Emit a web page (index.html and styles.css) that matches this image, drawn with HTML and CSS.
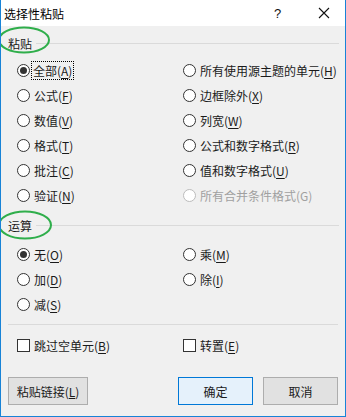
FILE: index.html
```html
<!DOCTYPE html>
<html lang="zh-CN">
<head>
  <meta charset="UTF-8" />
  <meta name="viewport" content="width=device-width, initial-scale=1.0" />
  <title>选择性粘贴</title>
  <link rel="stylesheet" href="styles.css">
</head>
<body>

  <div class="dialog">
    <!-- Title bar -->
    <div class="titlebar">
      <span class="title">选择性粘贴</span>
      <span class="help">?</span>
      <span class="close">
        <svg width="12" height="12" viewBox="0 0 12 12"><path d="M1 1L11 11M11 1L1 11" stroke="#111" stroke-width="1.1" fill="none"/></svg>
      </span>
    </div>

    <div class="content">
      <!-- Paste -->
      <div class="group-head"><span class="group-label">粘贴</span><span class="group-line"></span></div>
      <div class="options">
        <label class="opt"><span class="radio checked"></span><span class="focus">全部(<u>A</u>)</span></label>
        <label class="opt"><span class="radio"></span>所有使用源主题的单元(<u>H</u>)</label>
        <label class="opt"><span class="radio"></span>公式(<u>F</u>)</label>
        <label class="opt"><span class="radio"></span>边框除外(<u>X</u>)</label>
        <label class="opt"><span class="radio"></span>数值(<u>V</u>)</label>
        <label class="opt"><span class="radio"></span>列宽(<u>W</u>)</label>
        <label class="opt"><span class="radio"></span>格式(<u>T</u>)</label>
        <label class="opt"><span class="radio"></span>公式和数字格式(<u>R</u>)</label>
        <label class="opt"><span class="radio"></span>批注(<u>C</u>)</label>
        <label class="opt"><span class="radio"></span>值和数字格式(<u>U</u>)</label>
        <label class="opt"><span class="radio"></span>验证(<u>N</u>)</label>
        <label class="opt disabled"><span class="radio"></span>所有合并条件格式(G)</label>
      </div>

      <!-- Operation -->
      <div class="group-head second"><span class="group-label">运算</span><span class="group-line"></span></div>
      <div class="options ops">
        <label class="opt"><span class="radio checked"></span>无(<u>O</u>)</label>
        <label class="opt"><span class="radio"></span>乘(<u>M</u>)</label>
        <label class="opt"><span class="radio"></span>加(<u>D</u>)</label>
        <label class="opt"><span class="radio"></span>除(<u>I</u>)</label>
        <label class="opt"><span class="radio"></span>减(<u>S</u>)</label>
      </div>

      <div class="separator"></div>

      <div class="options checks">
        <label class="opt"><span class="checkbox"></span>跳过空单元(<u>B</u>)</label>
        <label class="opt"><span class="checkbox"></span>转置(<u>E</u>)</label>
      </div>

      <div class="buttons">
        <button class="btn link">粘贴链接(<u>L</u>)</button>
        <span class="spacer"></span>
        <button class="btn default">确定</button>
        <button class="btn">取消</button>
      </div>
    </div>

    <!-- annotation marks -->
    <svg class="mark mark-1" width="54" height="28" viewBox="0 0 54 28"><ellipse cx="26" cy="14" rx="25" ry="12.5" fill="none" stroke="#2fae4b" stroke-width="2"/></svg>
    <svg class="mark mark-2" width="56" height="30" viewBox="0 0 56 30"><ellipse cx="27" cy="15" rx="26" ry="13.5" fill="none" stroke="#2fae4b" stroke-width="2"/></svg>
  </div>

</body>
</html>
```

FILE: styles.css
```css
body {
  margin: 0;
  padding: 0;
  background: #ffffff;
  font-family: "Noto Sans CJK SC", "Noto Sans", sans-serif;
  font-size: 12px;
  color: #1a1a1a;
}

.dialog {
  position: relative;
  width: 346px;
  height: 417px;
  box-sizing: border-box;
  border: 1px solid #1883d7;
  border-top: none;
  background: #f0f0f0;
  overflow: hidden;
}

.titlebar {
  display: flex;
  align-items: center;
  height: 26px;
  background: #ffffff;
  padding-left: 3px;
}

.title {
  flex: 1;
  font-size: 12px;
  color: #000;
}

.help {
  width: 12px;
  margin-right: 32px;
  font-family: "Liberation Sans", sans-serif;
  font-size: 13px;
  color: #111;
}

.close {
  display: flex;
  width: 12px;
  margin-right: 15px;
}

.content {
  padding: 7px 6px 0 6px;
}

.group-head {
  display: flex;
  align-items: center;
  height: 20px;
}

.group-head.second {
  margin-top: 7px;
}

.group-label {
  padding: 0 4px 0 1px;
}

.group-line {
  flex: 1;
  height: 1px;
  background: #dadada;
}

.options {
  display: grid;
  grid-template-columns: 166px 1fr;
  padding-left: 10px;
  margin-top: 5px;
}

.options.ops {
  margin-top: 7px;
}

.opt {
  display: flex;
  align-items: center;
  height: 25px;
  white-space: nowrap;
}

.opt u {
  text-decoration-thickness: 1px;
  text-underline-offset: 2px;
}

.radio {
  position: relative;
  width: 11px;
  height: 11px;
  border: 1px solid #333;
  border-radius: 50%;
  background: #fff;
  margin-right: 4px;
  flex-shrink: 0;
}

.radio.checked::after {
  content: "";
  position: absolute;
  left: 2px;
  top: 2px;
  width: 7px;
  height: 7px;
  border-radius: 50%;
  background: #333;
}

.disabled {
  color: #a0a0a0;
}

.disabled .radio {
  border-color: #bcbcbc;
}

.focus {
  outline: 1px dotted #000;
  outline-offset: 0;
  padding: 0 1px;
  margin-left: -2px;
  line-height: 17px;
}

.separator {
  height: 1px;
  background: #dadada;
  margin: 7px 1px 0 1px;
}

.options.checks {
  margin-top: 8px;
}

.checkbox {
  width: 11px;
  height: 11px;
  border: 1px solid #333;
  background: #fff;
  margin-right: 4px;
  flex-shrink: 0;
}

.buttons {
  display: flex;
  margin-top: 19px;
  padding-left: 1px;
  padding-right: 1px;
}

.spacer {
  flex: 1;
}

.btn {
  height: 28px;
  width: 75px;
  margin: 0 0 0 10px;
  padding: 0;
  font-family: inherit;
  font-size: 12px;
  color: #1a1a1a;
  background: #e1e1e1;
  border: 1px solid #adadad;
}

.btn.link {
  width: 80px;
  margin-left: 0;
}

.btn.default {
  background: #e5f1fb;
  border: 1px solid #0078d7;
  margin-left: 0;
}

.mark {
  position: absolute;
}

.mark-1 {
  left: -3px;
  top: 26px;
}

.mark-2 {
  left: -3px;
  top: 210px;
}
```
